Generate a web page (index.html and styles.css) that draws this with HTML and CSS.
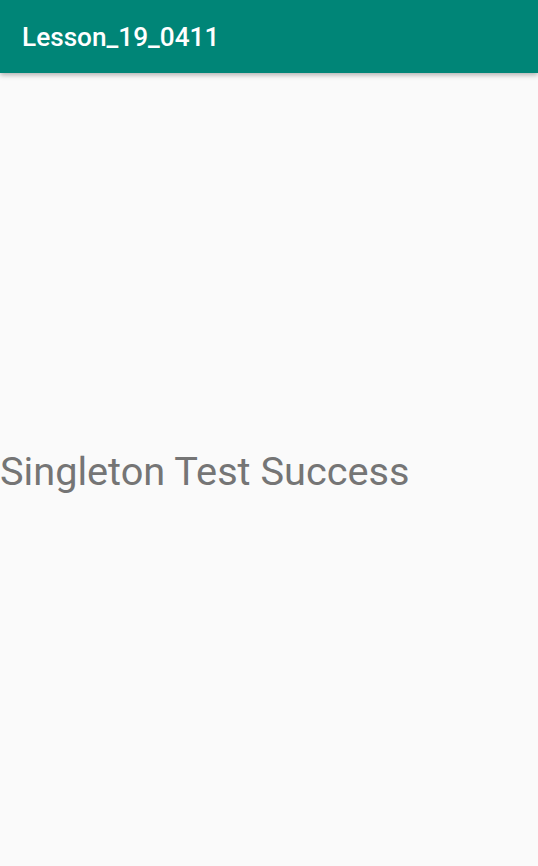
FILE: index.html
```html
<!DOCTYPE html>
<html>
<head>
<meta charset="utf-8">
<link rel="stylesheet" href="styles.css">
</head>
<body>
<div class="app">
  <header class="appbar"><h1 class="title">Lesson_19_0411</h1></header>
  <main class="content"><p class="message">Singleton Test Success</p></main>
</div>
</body>
</html>
```
FILE: styles.css
```css
html, body { margin: 0; padding: 0; height: 100%; }
body { background: #fafafa; font-family: Roboto, "Noto Sans", sans-serif; }
.app { display: flex; flex-direction: column; height: 866px; }
.appbar {
  height: 73px; flex: none; background: #008577;
  display: flex; align-items: center; padding-left: 22px;
  box-shadow: 0 2px 5px rgba(0,0,0,0.3);
  position: relative; z-index: 1;
}
.title { margin: 0; color: #fff; font-size: 26.2px; font-weight: 500; }
.content { flex: 1; display: flex; align-items: center; padding-top: 4px; }
.message { margin: 0; color: #757575; font-size: 39.7px; font-weight: 400; }
```
